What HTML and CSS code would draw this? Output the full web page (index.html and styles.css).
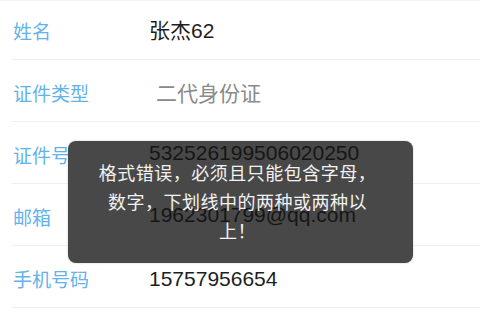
FILE: index.html
```html
<!DOCTYPE html>
<html lang="zh-CN">
<head>
<meta charset="utf-8">
<title>个人信息</title>
<link rel="stylesheet" href="styles.css">
</head>
<body>
<div class="page">
  <ul class="list">
    <li class="row"><span class="label">姓名</span><span class="value">张杰62</span></li>
    <li class="row"><span class="label">证件类型</span><span class="value value-muted">二代身份证</span></li>
    <li class="row"><span class="label">证件号码</span><span class="value value-shift">532526199506020250</span></li>
    <li class="row"><span class="label">邮箱</span><span class="value value-shift">1962301799@qq.com</span></li>
    <li class="row"><span class="label">手机号码</span><span class="value">15757956654</span></li>
  </ul>
  <div class="toast">
    <p class="toast-text">格式错误，必须且只能包含字母，数字，下划线中的两种或两种以上！</p>
  </div>
</div>
</body>
</html>
```
FILE: styles.css
```css
html, body {
  margin: 0;
  padding: 0;
  background: #ffffff;
}
body {
  width: 480px;
  height: 320px;
  overflow: hidden;
  font-family: "Liberation Sans", "Noto Sans CJK SC", sans-serif;
}
.page {
  position: relative;
  width: 480px;
  height: 320px;
  border-top: 1px solid #f4f4f4;
  box-sizing: border-box;
}
.list {
  list-style: none;
  margin: -3px 0 0 0;
  padding: 0;
}
.row {
  display: flex;
  align-items: center;
  margin-left: 12px;
  padding-top: 4px;
  box-sizing: border-box;
  height: 62px;
  border-bottom: 1px solid #efefef;
}
.label {
  width: 136px;
  flex: none;
  padding-left: 1px;
  margin-top: 4px;
  font-size: 19px;
  line-height: 24px;
  color: #63b2ea;
}
.value {
  position: relative;
  z-index: 1;
  font-size: 21px;
  line-height: 26px;
  color: #1e1e1e;
}
.value-shift {
  top: -2px;
  color: #161616;
}
.value-muted {
  color: #8a8a8a;
  padding-left: 7px;
  top: 1px;
}
.toast {
  position: absolute;
  left: 68px;
  top: 140px;
  width: 345px;
  height: 122px;
  border-radius: 8px;
  background: #484848;
  display: flex;
  justify-content: center;
  box-shadow: 0 0 2px rgba(0,0,0,0.25);
}
.toast-text {
  position: relative;
  z-index: 2;
  margin: 17px 0 0 -6px;
  width: 282px;
  text-align: center;
  font-family: "Noto Sans CJK SC", sans-serif;
  font-size: 18px;
  letter-spacing: 0.5px;
  line-height: 29px;
  color: #f2f2f2;
}
```
